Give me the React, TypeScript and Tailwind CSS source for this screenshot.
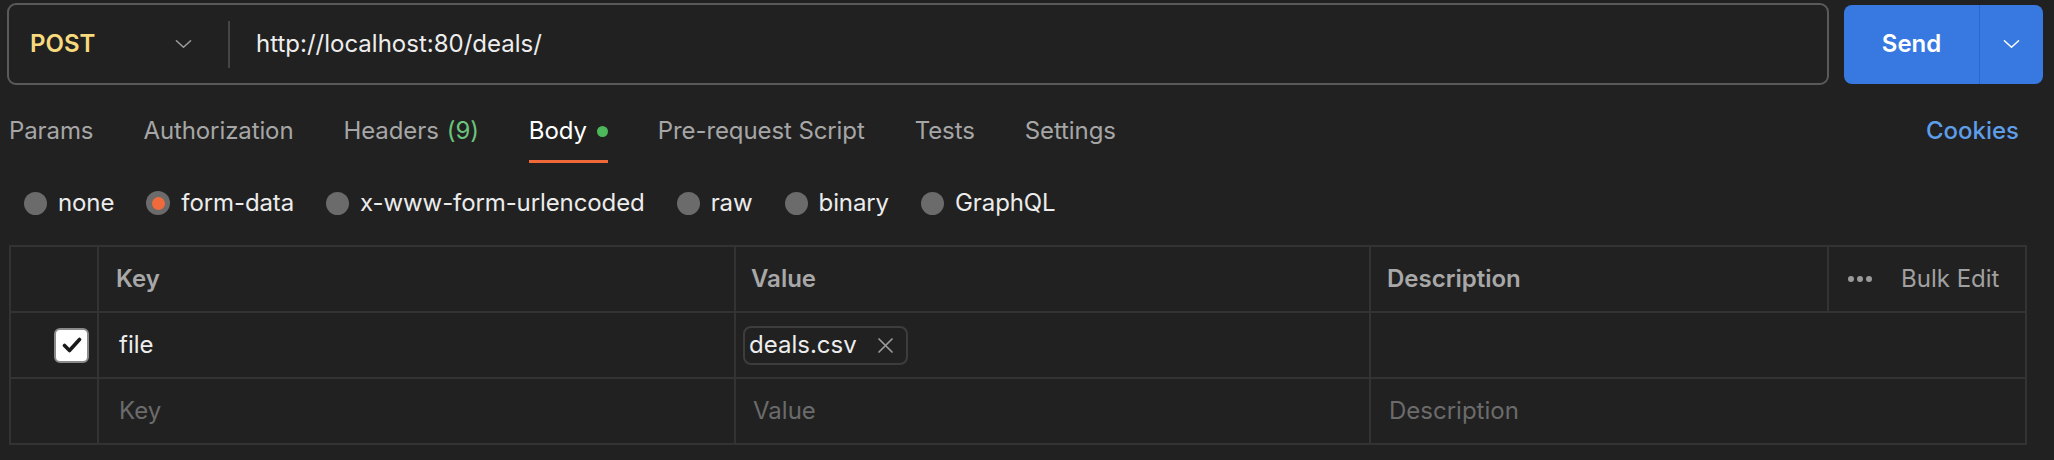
import React from 'react';

const Chevron = ({ className }: { className?: string }) => (
    <svg className={className} viewBox="0 0 18 10" fill="none" stroke="currentColor" strokeWidth="1.6" strokeLinecap="round" strokeLinejoin="round">
        <path d="M1.5 1.5L9 8.5l7.5-7" />
    </svg>
);

const tabs = [
    { label: 'Params' },
    { label: 'Authorization' },
    { label: 'Headers', count: '(9)' },
    { label: 'Body', active: true },
    { label: 'Pre-request Script' },
    { label: 'Tests' },
    { label: 'Settings' },
];

const bodyTypes = ['none', 'form-data', 'x-www-form-urlencoded', 'raw', 'binary', 'GraphQL'];

const App: React.FC = () => {
    return (
        <div className="w-full min-h-screen bg-[#212121] text-[24px] text-[#e8e8e8] font-['Inter','Liberation_Sans',sans-serif] overflow-hidden">
            {/* request bar */}
            <div className="flex items-center gap-[15px] pl-[7px] pr-[11px] pt-[3px]">
                <div className="flex-1 h-[82px] border-2 border-[#5a5a5a] rounded-[9px] flex items-center pl-[21px]">
                    <div className="w-[162px] flex items-center justify-between">
                        <span className="font-semibold text-[#f7da7e]">POST</span>
                        <Chevron className="w-[17px] h-[10px] text-[#9c9c9c]" />
                    </div>
                    <div className="ml-[36px] w-[2px] h-[47px] bg-[#454545]" />
                    <span className="ml-[26px] text-[#ededed]">http://localhost:80/deals/</span>
                </div>
                <div className="w-[199px] h-[79px] rounded-[8px] bg-[#3879e1] flex">
                    <div className="w-[135px] flex items-center justify-center font-semibold text-white">Send</div>
                    <div className="w-[1px] bg-[#2d67c7]" />
                    <div className="flex-1 flex items-center justify-center">
                        <Chevron className="w-[17px] h-[10px] text-white" />
                    </div>
                </div>
            </div>

            {/* tabs */}
            <div className="mt-[17px] flex items-end justify-between pl-[9px] pr-[35px]">
                <div className="flex gap-[50px] tracking-[-0.1px]">
                    {tabs.map((tab) => (
                        <div
                            key={tab.label}
                            className={`h-[61px] flex items-center border-b-[3px] ${tab.active ? 'border-[#f0693a] text-white' : 'border-transparent text-[#a6a6a6]'}`}
                        >
                            {tab.label}
                            {tab.count && <span className="ml-[8px] text-[#6cc47c]">{tab.count}</span>}
                            {tab.active && <span className="ml-[10px] w-[11px] h-[11px] rounded-full bg-[#4cb75b]" />}
                        </div>
                    ))}
                </div>
                <div className="h-[61px] flex items-center pb-[3px] font-medium text-[#5e9de8]">Cookies</div>
            </div>

            {/* body type */}
            <div className="mt-[20px] h-[40px] flex items-center pl-[24px] gap-[32px] tracking-[-0.1px]">
                {bodyTypes.map((type) => (
                    <div key={type} className="flex items-center gap-[11px]">
                        {type === 'form-data' ? (
                            <span className="w-[24px] h-[24px] rounded-full bg-[#6b6b6b] flex items-center justify-center">
                                <span className="w-[13px] h-[13px] rounded-full bg-[#f06a3c]" />
                            </span>
                        ) : (
                            <span className="w-[23px] h-[23px] rounded-full bg-[#6b6b6b]" />
                        )}
                        <span className="text-[#ececec]">{type}</span>
                    </div>
                ))}
            </div>

            {/* form table */}
            <div className="mt-[22px] ml-[9px] mr-[27px] border-t-2 border-l-2 border-[#333333]">
                <div className="flex h-[66px]">
                    <div className="w-[88px] border-r-2 border-b-2 border-[#333333]" />
                    <div className="w-[637px] border-r-2 border-b-2 border-[#333333] flex items-center pl-[17px] font-semibold text-[#a8a8a8]">Key</div>
                    <div className="w-[635px] border-r-2 border-b-2 border-[#333333] flex items-center pl-[15px] font-semibold text-[#a8a8a8]">Value</div>
                    <div className="w-[458px] border-r-2 border-b-2 border-[#333333] flex items-center pl-[16px] font-semibold text-[#a8a8a8]">Description</div>
                    <div className="flex-1 border-r-2 border-b-2 border-[#333333] flex items-center pl-[19px] text-[#a0a0a0]">
                        <span className="flex gap-[3px]">
                            <span className="w-[6px] h-[6px] rounded-full bg-[#9a9a9a]" />
                            <span className="w-[6px] h-[6px] rounded-full bg-[#9a9a9a]" />
                            <span className="w-[6px] h-[6px] rounded-full bg-[#9a9a9a]" />
                        </span>
                        <span className="ml-[29px]">Bulk Edit</span>
                    </div>
                </div>
                <div className="flex h-[66px]">
                    <div className="w-[88px] border-r-2 border-b-2 border-[#333333] flex items-center justify-end pr-[8px]">
                        <span className="w-[35px] h-[35px] rounded-[6px] bg-white border-2 border-[#8a8a8a] flex items-center justify-center">
                            <svg className="w-[20px] h-[16px]" viewBox="0 0 20 16" fill="none" stroke="#1a1a1a" strokeWidth="3.6" strokeLinecap="round" strokeLinejoin="round">
                                <path d="M2.5 8.5l5 5L17.5 2.5" />
                            </svg>
                        </span>
                    </div>
                    <div className="w-[637px] border-r-2 border-b-2 border-[#333333] flex items-center pl-[20px] text-[#ededed]">file</div>
                    <div className="w-[635px] border-r-2 border-b-2 border-[#333333] flex items-center pl-[7px]">
                        <span className="h-[39px] flex items-center border-2 border-[#3d3d3d] rounded-[8px] pl-[4px] pr-[12px] text-[#ededed]">
                            deals.csv
                            <svg className="ml-[20px] w-[17px] h-[17px]" viewBox="0 0 17 17" fill="none" stroke="#9a9a9a" strokeWidth="1.7" strokeLinecap="round">
                                <path d="M2 2l13 13M15 2L2 15" />
                            </svg>
                        </span>
                    </div>
                    <div className="flex-1 border-r-2 border-b-2 border-[#333333]" />
                </div>
                <div className="flex h-[66px] text-[#6b6b6b]">
                    <div className="w-[88px] border-r-2 border-b-2 border-[#333333]" />
                    <div className="w-[637px] border-r-2 border-b-2 border-[#333333] flex items-center pl-[20px]">Key</div>
                    <div className="w-[635px] border-r-2 border-b-2 border-[#333333] flex items-center pl-[17px]">Value</div>
                    <div className="flex-1 border-r-2 border-b-2 border-[#333333] flex items-center pl-[18px]">Description</div>
                </div>
            </div>
        </div>
    );
};

export default App;
